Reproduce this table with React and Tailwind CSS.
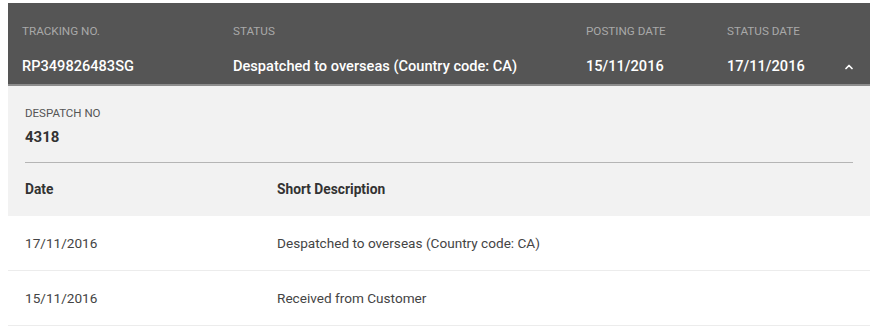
import { ChevronUp } from "lucide-react";

const header = [
  { label: "Tracking No.", value: "RP349826483SG", width: "w-[211px]" },
  { label: "Status", value: "Despatched to overseas (Country code: CA)", width: "w-[353px]" },
  { label: "Posting Date", value: "15/11/2016", width: "w-[141px]" },
  { label: "Status Date", value: "17/11/2016", width: "w-[112px]" },
];

const events = [
  { date: "17/11/2016", text: "Despatched to overseas (Country code: CA)" },
  { date: "15/11/2016", text: "Received from Customer" },
];

export default function App() {
  return (
    <div className="min-h-[326px] bg-white pt-[3px] pl-2 pr-[5px] font-['Roboto',sans-serif]">
      <div className="bg-[#555555] border-b-2 border-[#8d8d8d] flex pl-[14px] h-[83px]">
        {header.map((col) => (
          <div key={col.label} className={`${col.width} shrink-0 pt-[20px]`}>
            <div className="text-[11.7px] uppercase text-[#a9a9a9] leading-[16px]">{col.label}</div>
            <div className="mt-[18px] text-[14.6px] font-medium text-white leading-[18px]">{col.value}</div>
          </div>
        ))}
        <div className="pt-[58px] pl-[4px]">
          <ChevronUp size={12} strokeWidth={3.5} className="text-white" />
        </div>
      </div>

      <div className="bg-[#f2f2f2] px-[17px] pt-[19px]">
        <div className="text-[11.5px] uppercase text-[#555] leading-[16px]">Despatch No</div>
        <div className="mt-[7px] text-[15px] font-bold text-[#333] leading-[18px]">4318</div>
        <div className="mt-[16px] border-t border-[#b5b5b5]" />
        <div className="flex h-[53px] items-center text-[13.75px] font-bold text-[#333]">
          <div className="w-[252px]">Date</div>
          <div>Short Description</div>
        </div>
      </div>

      {events.map((e) => (
        <div key={e.date} className="flex h-[55px] items-center px-[17px] border-b border-[#ececec] text-[13.6px] text-[#444]">
          <div className="w-[252px]">{e.date}</div>
          <div>{e.text}</div>
        </div>
      ))}
    </div>
  );
}
